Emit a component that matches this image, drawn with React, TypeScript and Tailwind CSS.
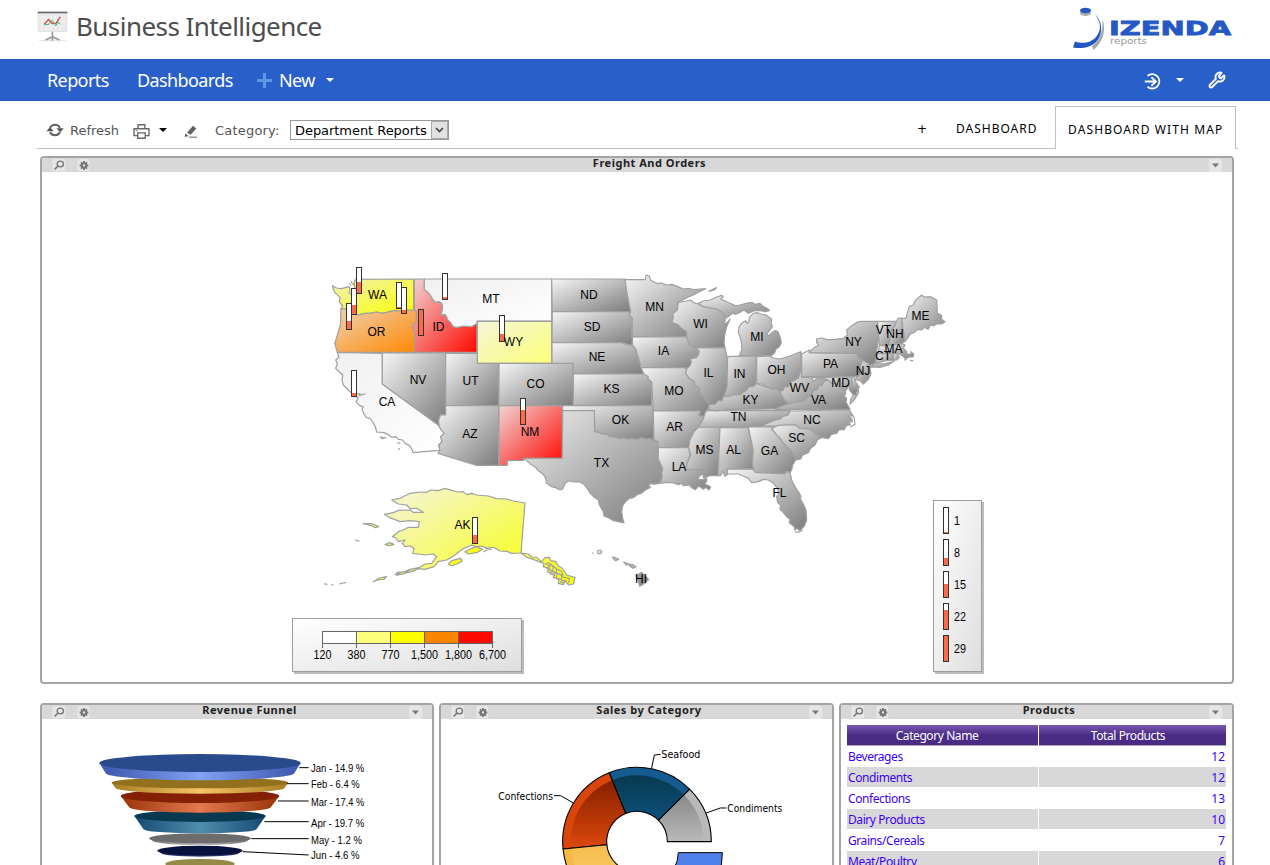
import type { ReactNode } from "react";
import { Wrench } from "lucide-react";

type Shape = { d: string; fill?: string };
type Slice = { from: number; to: number; rim: string; face: string };

const COAST = "L292,158 L288,172 L291,182 L282,192 L276,202 L281,208 L284,215 L284,277";

const WEST: Shape[] = [
  { fill: "url(#yellow)", d: "M37,77 L50,84 L64,86 L76,83 L88,80 L90,91 L87,98 L93,102 L100,96 L105,84 L101,72 L107,58 L281,57 L281,150 L258,151 L240,153 L222,152 L200,157 L185,160 L170,156 L150,160 L135,160 L120,164 L108,164 L95,160 L92,152 L85,148 L63,146 L68,138 L58,126 L60,112 L45,98 L40,88 Z" },
  { fill: "url(#orange)", d: "M63,146 L85,148 L92,152 L95,160 L108,164 L120,164 L135,160 L150,160 L170,156 L185,160 L200,157 L222,152 L240,153 L258,151 L281,150 " + COAST + " L52,277 L44,250 L50,232 L55,215 L61,195 L62,170 Z" },
  { fill: "url(#red)", d: "M283,57 L313,57 L313,88 L322,96 L330,104 L338,118 L347,127 L358,125 L367,132 L367,150 L362,165 L374,163 L380,170 L382,178 L392,188 L400,200 L410,202 L430,198 L455,200 L464,194 L471,192 L471,277 L284,277 L284,215 L276,202 L282,192 L291,182 L288,172 L292,158 L283,150 Z" },
  { fill: "url(#white)", d: "M313,57 L695,57 L695,183 L471,183 L471,192 L464,194 L455,200 L430,198 L410,202 L400,200 L392,188 L382,178 L380,170 L374,163 L362,165 L367,150 L367,132 L358,125 L347,127 L338,118 L330,104 L322,96 L313,88 Z" },
  { fill: "url(#paleYellow)", d: "M472,184 L695,184 L695,310 L472,310 Z" },
  { fill: "url(#white)", d: "M52,277 L187,280 L187,372 L355,495 L362,508 L373,520 L362,530 L366,545 L356,555 L360,571 L320,574 L280,578 L275,566 L268,556 L255,550 L248,540 L235,538 L228,530 L215,532 L205,524 L192,518 L170,516 L166,500 L158,486 L150,475 L140,473 L132,463 L126,448 L130,440 L118,436 L108,425 L115,412 L103,410 L95,400 L85,390 L70,375 L66,362 L68,345 L58,336 L47,325 L52,312 L47,300 L57,292 Z" },
  { d: "M187,279 L377,279 L377,465 L368,466 L362,464 L356,480 L358,496 L355,495 L187,372 Z" },
  { d: "M377,280 L472,280 L472,310 L536,310 L536,437 L377,437 Z" },
  { d: "M377,437 L536,437 L536,616 L470,616 L354,580 L360,571 L356,555 L366,545 L362,530 L373,520 L362,508 L357,495 L356,480 L362,464 L377,465 Z" },
  { d: "M537,310 L760,310 L760,437 L537,437 Z" },
  { fill: "url(#red)", d: "M537,437 L727,437 L727,594 L612,595 L612,601 L562,602 L562,616 L537,616 Z" },
  { fill: "none", d: "M108,402 L120,401 L118,407 L128,403 L137,402 M180,530 L190,534 L200,533 M183,536 L193,535 M232,548 L241,550 M234,566 L240,568 M87,70 L93,76 M92,64 L98,72 L104,74" },
];

const CENTRAL: Shape[] = [
  { d: "M35,42 L255,42 L259,70 L265,90 L268,110 L272,140 L37,140 Z" },
  { d: "M37,140 L272,140 L268,150 L277,160 L275,215 L278,225 L275,240 L262,238 L245,233 L36,233 Z" },
  { d: "M36,233 L245,233 L262,240 L278,242 L287,252 L292,270 L298,282 L303,305 L312,327 L100,327 L100,295 L36,295 Z" },
  { d: "M100,327 L315,327 L325,335 L324,342 L335,352 L335,421 L100,421 Z" },
  { d: "M68,422 L338,422 L342,470 L340,525 L328,520 L320,523 L305,518 L290,523 L275,520 L260,523 L250,518 L240,522 L225,516 L210,515 L200,507 L190,508 L175,502 L164,498 L163,437 L68,437 Z" },
  { fill: "url(#texas)", d: "M68,437 L163,437 L164,500 L175,502 L190,508 L200,507 L210,515 L225,516 L240,522 L250,518 L260,523 L275,520 L290,523 L305,518 L320,523 L328,520 L342,526 L354,530 L354,582 L362,596 L368,610 L365,625 L367,635 L358,655 L340,658 L334,655 L325,662 L332,667 L315,676 L304,685 L293,688 L280,698 L268,700 L255,712 L248,722 L245,740 L248,760 L252,774 L235,770 L218,766 L205,758 L192,753 L190,740 L178,720 L175,705 L162,696 L150,684 L144,674 L132,658 L118,650 L100,651 L85,648 L76,654 L68,672 L60,675 L47,668 L35,665 L20,655 L16,638 L10,628 L-4,618 L-14,607 L-30,596 L-48,580 L67,580 Z" },
  { d: "M255,44 L316,44 L318,30 L328,33 L332,46 L350,55 L365,54 L380,60 L395,58 L412,64 L430,72 L445,70 L460,74 L497,71 L478,80 L460,90 L440,98 L415,112 L412,135 L398,146 L400,158 L396,172 L415,180 L422,188 L440,200 L442,215 L277,215 L277,160 L268,150 L272,140 L265,105 L262,90 Z" },
  { d: "M277,216 L441,216 L445,232 L448,240 L458,245 L465,250 L478,258 L476,268 L470,277 L452,282 L454,292 L450,302 L440,312 L432,308 L303,308 L297,285 L292,270 L287,252 L278,242 Z" },
  { d: "M303,308 L432,308 L440,312 L437,325 L448,340 L463,350 L463,362 L475,365 L480,374 L478,385 L492,395 L498,408 L508,418 L505,432 L497,437 L492,455 L475,450 L482,438 L340,438 L335,350 L324,342 L325,335 L312,327 Z" },
  { d: "M340,438 L482,438 L476,452 L492,455 L486,470 L478,482 L470,488 L462,500 L458,510 L450,525 L448,548 L355,548 L354,530 L342,525 Z" },
  { d: "M355,548 L446,548 L450,570 L443,590 L437,612 L488,614 L488,626 L478,634 L473,642 L488,644 L500,638 L500,650 L494,656 L512,666 L507,675 L498,667 L490,673 L476,663 L466,674 L455,668 L448,660 L430,662 L425,655 L415,659 L400,654 L380,652 L362,655 L367,635 L365,625 L368,610 L355,582 Z" },
  { d: "M478,485 L540,487 L534,632 L510,632 L490,638 L488,614 L437,612 L443,590 L452,570 L446,548 L450,525 L462,500 Z" },
  { d: "M540,487 L625,488 L637,555 L640,610 L562,612 L565,626 L555,634 L548,618 L542,632 L534,632 Z" },
  { d: "M465,248 L555,248 L561,275 L561,350 L562,375 L550,395 L545,408 L535,406 L525,418 L508,418 L498,408 L492,395 L478,385 L480,374 L475,365 L463,362 L463,350 L448,340 L437,325 L440,312 L450,302 L454,292 L452,282 L470,277 L476,268 L478,258 Z" },
  { d: "M563,275 L648,272 L648,355 L640,365 L628,364 L618,378 L608,382 L600,390 L585,388 L573,393 L550,395 L555,385 L561,365 Z" },
  { d: "M415,112 L440,108 L452,105 L460,113 L475,117 L490,125 L530,132 L545,140 L552,147 L556,165 L550,180 L562,172 L570,162 L560,185 L554,210 L552,232 L555,248 L465,248 L448,240 L440,215 L440,200 L422,188 L415,180 L396,172 L400,158 L398,146 L412,135 Z" },
  { d: "M475,115 L490,108 L510,105 L530,96 L545,91 L550,95 L542,102 L560,110 L572,116 L585,122 L600,120 L618,115 L635,112 L645,118 L660,115 L668,123 L685,132 L688,137 L675,140 L660,136 L640,138 L625,145 L612,135 L600,142 L585,148 L578,144 L565,155 L556,160 L552,147 L545,140 L530,132 L490,125 Z" },
  { d: "M507,79 L520,72 L530,68 L523,75 Z" },
  { d: "M505,437 L750,437 L745,450 L728,460 L715,464 L700,475 L682,478 L665,487 L475,486 L486,470 L492,455 L497,440 Z" },
  { d: "M505,434 L508,418 L525,418 L535,406 L545,408 L550,395 L573,393 L585,388 L600,390 L608,382 L618,378 L628,364 L640,365 L650,355 L662,360 L675,365 L700,367 L720,378 L730,395 L745,413 L725,425 L705,432 L560,433 L530,438 Z" },
];

const EAST: Shape[] = [
  { d: "M40,100 L52,98 L62,102 L78,105 L95,118 L93,128 L97,140 L90,150 L80,162 L85,168 L93,160 L105,152 L114,155 L120,170 L124,188 L118,200 L108,207 L104,218 L95,227 L-2,227 L5,210 L5,192 L2,175 L-5,158 L-3,142 L3,132 L10,126 L18,122 L20,130 L27,125 L28,112 Z" },
  { d: "M50,230 L88,228 L100,234 L120,237 L150,228 L165,222 L183,215 L183,265 L180,280 L175,295 L162,300 L155,305 L150,315 L142,322 L135,318 L130,330 L120,333 L110,326 L98,328 L75,318 L65,312 L50,310 Z" },
  { d: "M185,222 L208,210 L208,218 L350,220 L356,232 L368,240 L360,262 L368,275 L355,288 L345,290 L185,290 Z" },
  { d: "M183,265 L185,292 L217,292 L218,305 L230,297 L245,293 L265,300 L252,305 L245,318 L238,315 L232,330 L220,332 L216,346 L205,350 L195,360 L180,365 L165,366 L150,371 L138,365 L130,355 L125,345 L120,335 L130,330 L135,318 L142,322 L150,315 L155,305 L175,295 Z" },
  { d: "M265,300 L272,308 L290,312 L295,320 L308,328 L318,340 L312,348 L320,355 L318,366 L325,378 L330,388 L105,388 L125,378 L150,371 L165,366 L180,365 L195,360 L205,350 L216,346 L220,332 L232,330 L238,315 L245,318 L252,305 Z" },
  { d: "M217,293 L335,291 L340,318 L355,325 L348,345 L340,345 L328,330 L325,308 L322,325 L315,335 L300,320 L290,312 L272,308 L265,300 L245,293 L230,297 L218,305 Z" },
  { d: "M335,290 L342,292 L348,308 L358,322 L340,324 Z" },
  { d: "M340,345 L350,345 L342,360 L330,372 L332,358 Z" },
  { d: "M368,240 L392,252 L390,265 L393,280 L385,298 L370,312 L362,303 L345,298 L355,288 L368,275 L360,262 Z" },
  { d: "M208,216 L220,205 L236,195 L230,188 L230,177 L245,174 L262,179 L285,178 L310,175 L322,165 L320,150 L335,137 L352,126 L365,124 L413,124 L415,150 L415,180 L408,222 L405,250 L392,255 L368,240 L356,232 L350,220 L208,218 Z" },
  { d: "M386,262 L410,252 L435,251 L462,244 L445,255 L420,262 L400,261 Z" },
  { d: "M413,124 L470,124 L465,138 L455,150 L450,175 L447,196 L418,196 Z" },
  { d: "M470,124 L475,114 L485,115 L489,150 L495,183 L485,190 L447,195 L450,175 L455,150 L465,138 Z" },
  { d: "M418,197 L447,196 L485,190 L495,195 L490,205 L498,212 L502,222 L515,222 L512,215 L521,222 L520,230 L502,232 L498,238 L488,228 L478,222 L413,222 Z" },
  { d: "M413,222 L460,220 L460,240 L435,243 L407,250 Z" },
  { d: "M460,220 L472,221 L478,232 L470,240 L460,241 Z" },
  { d: "M485,115 L498,115 L502,98 L508,80 L520,75 L525,62 L545,45 L552,51 L572,50 L590,60 L592,100 L605,106 L604,117 L615,125 L605,132 L590,132 L580,138 L572,134 L564,148 L553,142 L545,150 L532,148 L523,158 L512,160 L502,176 L495,185 Z" },
  { d: "M150,393 L328,390 L338,408 L322,408 L335,415 L337,425 L320,428 L332,433 L318,438 L312,450 L298,448 L290,460 L275,463 L265,476 L243,472 L210,447 L180,445 L165,440 L105,438 L65,438 L82,430 L100,422 L120,417 L130,409 L145,405 Z" },
  { fill: "none", d: "M328,390 L342,412 L345,433 L330,441 M510,241 L520,242 M492,240 L499,239 M355,327 L356,338 L342,360" },
  { d: "M95,445 L115,436 L165,434 L180,445 L210,447 L243,474 L232,480 L225,495 L212,505 L205,518 L188,525 L182,537 L167,540 L160,525 L155,515 L140,500 L130,490 L118,472 L108,463 Z" },
  { d: "M25,441 L100,440 L95,447 L108,463 L118,472 L130,490 L140,500 L155,515 L160,525 L167,540 L158,555 L155,570 L150,578 L138,574 L135,582 L45,577 L37,555 L40,510 L32,475 Z" },
  { d: "M-38,567 L40,568 L45,577 L135,582 L138,574 L150,578 L155,600 L165,620 L178,640 L183,650 L180,655 L190,672 L198,690 L200,720 L193,738 L180,752 L170,745 L164,750 L163,740 L148,728 L150,718 L140,710 L132,700 L120,688 L122,676 L113,668 L110,650 L117,640 L112,625 L100,610 L85,600 L70,598 L55,605 L35,608 L25,595 L10,588 L-5,582 L-38,582 Z" },
  { fill: "none", d: "M165,755 L176,757 L188,750" },
];

const FAR: Shape[] = [
  { fill: "url(#alaska)", d: "M245,60 L270,55 L300,40 L330,36 L350,37 L362,30 L385,32 L405,25 L425,31 L445,36 L460,35 L470,44 L485,40 L500,45 L535,48 L560,56 L590,57 L610,63 L645,69 L633,219 L605,220 L590,214 L570,213 L550,202 L530,205 L515,198 L500,200 L485,195 L478,198 L462,205 L450,213 L435,225 L425,232 L410,240 L385,245 L372,260 L345,268 L325,266 L305,275 L275,282 L260,286 L262,276 L280,277 L300,268 L330,262 L345,252 L365,250 L380,230 L370,222 L345,225 L325,222 L308,220 L312,205 L300,198 L285,200 L277,190 L285,180 L265,185 L258,174 L247,170 L265,155 L280,150 L295,142 L325,142 L328,125 L300,122 L270,125 L240,113 L223,103 L250,98 L265,91 L300,90 L310,97 L340,97 L320,85 L300,86 L290,75 L265,72 Z" },
  { fill: "url(#yellowIsland)", d: "M465,215 L485,205 L500,200 L518,208 L500,218 L475,222 Z M415,252 L425,242 L452,235 L457,243 L440,252 L425,258 Z M190,305 L208,294 L230,290 L222,298 L205,299 Z M160,131 L185,131 L206,140 L195,143 L182,136 Z M225,194 L240,188 L252,193 L238,197 Z M255,283 L280,276 L300,270 L280,282 Z" },
  { fill: "url(#yellowIsland)", d: "M633,219 L655,222 L665,231 L680,232 L695,245 L705,233 L718,232 L722,242 L738,245 L745,258 L756,264 L770,285 L795,293 L790,312 L775,315 L765,301 L760,314 L745,310 L747,297 L730,292 L735,280 L712,276 L718,265 L700,260 L702,250 L685,244 L670,238 L650,232 Z" },
  { fill: "none", d: "M705,250 L720,258 L711,266 L725,272 L720,282 L735,286 M712,246 L730,260 L728,274 L742,280 L738,295 L752,298 M722,252 L740,267 L738,278 L755,286 L754,300 L770,304 M740,267 L754,274 L760,291 L778,295 L776,310 M750,305 L762,308 M135,180 L148,184 M43,311 L52,314 M64,315 L70,313 M88,312 L108,307 M520,216 L535,207 L545,209 M525,202 L535,207" },
  { d: "M862,213 L870,210 L876,215 L872,221 L864,221 Z M847,218 L850,221 M907,231 L915,233 L926,238 L916,242 Z M941,246 L951,250 L960,253 L948,255 Z M957,255 L966,253 L978,260 L969,265 L960,259 Z M978,287 L995,277 L1005,286 L1016,299 L1001,312 L989,319 L985,302 Z" },
];

const LABELS: [string, number, number][] = [
  ["WA", 377.5, 299], ["OR", 376.5, 336], ["ID", 438.5, 331], ["MT", 491, 303], ["WY", 513.5, 346], ["NV", 418, 384],
  ["UT", 470.5, 385], ["CO", 535.5, 388], ["CA", 387, 406], ["AZ", 470, 438], ["NM", 530, 436], ["ND", 589, 299],
  ["SD", 592, 331], ["NE", 597, 361], ["KS", 611.5, 393], ["OK", 620.5, 424], ["TX", 601.5, 467], ["MN", 654.5, 311],
  ["IA", 663.5, 355], ["MO", 674, 395], ["AR", 674.5, 431], ["LA", 679, 471], ["WI", 700.5, 328], ["IL", 708.5, 377],
  ["IN", 739.5, 378], ["KY", 750.5, 404], ["TN", 738.5, 421], ["MS", 704.5, 454], ["AL", 733.5, 454], ["GA", 769.5, 455],
  ["FL", 779.5, 497], ["SC", 796.5, 442], ["NC", 812, 424], ["VA", 818.5, 404], ["WV", 799.5, 392], ["OH", 776.5, 374],
  ["MI", 757, 341], ["PA", 830.5, 368], ["MD", 840.5, 387], ["NJ", 863, 375], ["NY", 853.5, 346], ["VT", 883.5, 334],
  ["NH", 895, 338], ["MA", 893.5, 353], ["CT", 883, 360], ["ME", 920.5, 320], ["AK", 462.5, 529], ["HI", 641, 583],
];

const GAUGES: [number, number, number][] = [
  [359, 268, 11], [354, 289, 9], [349, 304, 8], [399, 283, 1], [404, 288, 3], [421, 310, 26], [445, 274, 2],
  [502, 316, 7], [354, 371, 3], [523, 399, 14], [475, 518, 8],
];

const GRADIENTS: [string, string, string][] = [
  ["grey", "#f6f6f6", "#7c7c7c"],
  ["texas", "#eeeeee", "#7c7c7c"],
  ["white", "#f0f0f0", "#ffffff"],
  ["yellow", "#f0f0b8", "#fbff00"],
  ["paleYellow", "#f5f5d8", "#fbff78"],
  ["orange", "#efd2b4", "#ff8800"],
  ["red", "#f0d4d4", "#ff0800"],
  ["alaska", "#f4f4e0", "#f8ff18"],
  ["yellowIsland", "#f8ff50", "#f8ff00"],
];

function States({ items, at }: { items: Shape[]; at: string }) {
  return (
    <g transform={`${at} scale(0.333333)`} stroke="#a0a0a0" strokeWidth="3.6" strokeLinejoin="round">
      {items.map((s, i) => <path key={i} d={s.d} fill={s.fill ?? "url(#grey)"} />)}
    </g>
  );
}

function Gauge({ x, y, level }: { x: number; y: number; level: number }) {
  return (
    <g>
      <rect x={x - 2.5} y={y - 0.5} width="5" height="26" fill="#fff" />
      <rect x={x - 2} y={y + 25 - level} width="4" height={level} fill="#fc6a48" />
      <rect x={x - 2.5} y={y - 0.5} width="5" height="26" fill="none" stroke="#333" />
    </g>
  );
}

function UsMap() {
  return (
    <svg viewBox="42 172 1190 510" className="block h-[510px] w-[1190px] font-['Liberation_Sans',sans-serif] text-[12px]">
      <defs>
        {GRADIENTS.map(([id, a, b]) => (
          <linearGradient key={id} id={id} x1="0" y1="0" x2="1" y2="1">
            <stop offset="0" stopColor={a} /><stop offset="1" stopColor={b} />
          </linearGradient>
        ))}
        <linearGradient id="legend" x1="0" y1="0" x2="1" y2="1"><stop stopColor="#fff" /><stop offset="1" stopColor="#dedede" /></linearGradient>
      </defs>
      <States items={WEST} at="translate(320 260)" />
      <States items={CENTRAL} at="translate(540 265)" />
      <States items={EAST} at="translate(740 280)" />
      <States items={FAR} at="translate(310 480)" />
      {GAUGES.map(([x, y, level], i) => <Gauge key={i} x={x} y={y} level={level} />)}
      <g textAnchor="middle">{LABELS.map(([t, x, y]) => <text key={t} x={x} y={y}>{t}</text>)}</g>

      <rect x="294" y="620" width="230" height="54" fill="#bcbcbc" />
      <rect x="292.5" y="618.5" width="229" height="53" fill="url(#legend)" stroke="#9d9d9d" />
      {["#ffffff", "#fbff7c", "#fbff00", "#fa8500", "#fa0a00"].map((c, i) => (
        <rect key={c} x={322.5 + i * 34} y="631.5" width="34" height="12" fill={c} stroke="#666" />
      ))}
      {["120", "380", "770", "1,500", "1,800", "6,700"].map((t, i) => (
        <g key={t}>
          <path d={`M${322.5 + i * 34},643 v5`} stroke="#666" />
          <text x={322.5 + i * 34} y="659" textAnchor="middle" textLength={t.length === 3 ? 18 : 27} lengthAdjust="spacingAndGlyphs">{t}</text>
        </g>
      ))}

      <rect x="935" y="502" width="49" height="172" fill="#bcbcbc" />
      <rect x="933.5" y="500.5" width="48" height="171" fill="url(#legend)" stroke="#9d9d9d" />
      {([["1", 1], ["8", 7], ["15", 13], ["22", 19], ["29", 25]] as [string, number][]).map(([t, level], i) => (
        <g key={t}>
          <Gauge x={946} y={508 + i * 32} level={level} />
          <text x="954" y={525 + i * 32} textLength={t.length * 6} lengthAdjust="spacingAndGlyphs">{t}</text>
        </g>
      ))}
    </svg>
  );
}

const DISCS = [
  { rx: 302, cy: 204, ry: 27, brx: 283, bcy: 234, bry: 22, top: "#2a4b8b", edge: "#3a55ad", mid: "#81a2f5", label: "Jan - 14.9 %", ly: 217, ty: 231 },
  { rx: 265, cy: 263, ry: 17, brx: 254, bcy: 278, bry: 18, top: "#92701d", edge: "#aa7d25", mid: "#f5c668", label: "Feb - 6.4 %", ly: 265, ty: 279 },
  { rx: 238, cy: 303, ry: 21, brx: 213, bcy: 336, bry: 17, top: "#842003", edge: "#9a3508", mid: "#e47850", label: "Mar - 17.4 %", ly: 317, ty: 333 },
  { rx: 197, cy: 363, ry: 18, brx: 170, bcy: 402, bry: 13, top: "#073a50", edge: "#174a76", mid: "#4e8dac", label: "Apr - 19.7 %", ly: 379, ty: 396 },
  { rx: 153, cy: 430, ry: 15, brx: 143, bcy: 437, bry: 13, top: "#6c6c6c", edge: "#777777", mid: "#bababa", label: "May - 1.2 %", ly: 430, ty: 447 },
  { rx: 128, cy: 467, ry: 15, brx: 118, bcy: 473, bry: 12, top: "#08123e", edge: "#0a174c", mid: "#495a99", label: "Jun - 4.6 %", ly: 469, ty: 492 },
  { rx: 104, cy: 506, ry: 14, brx: 96, bcy: 520, bry: 12, top: "#958a48", edge: "#908548", mid: "#d8cb80", label: "", ly: 0, ty: 0 },
];

function Funnel() {
  return (
    <svg viewBox="42 719 390 146" className="block h-[146px] w-[390px]">
      <defs>
        {DISCS.map((d, i) => (
          <linearGradient key={i} id={`disc${i}`}>
            <stop offset="0" stopColor={d.edge} /><stop offset="0.5" stopColor={d.mid} /><stop offset="1" stopColor={d.edge} />
          </linearGradient>
        ))}
      </defs>
      <g transform="translate(30 695) scale(0.333333)">
        {DISCS.map((d, i) => ({ d, i })).reverse().map(({ d, i }) => (
          <g key={i}>
            <path fill={`url(#disc${i})`} d={`M${510 - d.rx},${d.cy} L${510 - d.brx},${d.bcy} A${d.brx},${d.bry} 0 0 0 ${510 + d.brx},${d.bcy} L${510 + d.rx},${d.cy} Z`} />
            <ellipse cx="510" cy={d.cy} rx={d.rx} ry={d.ry} fill={d.top} />
            {d.label && <path d={`M${511 + d.rx - (i < 4 ? 5 : 0)},${d.ly + 1} L836,${i === 5 ? 480 : d.ly + 1}`} stroke="#000" strokeWidth="3" />}
            {d.label && <text x="843" y={d.ty} className="font-['Liberation_Sans',sans-serif] text-[33px]" textLength={d.label.length === 12 ? 160 : d.label.startsWith("May") ? 153 : 146} lengthAdjust="spacingAndGlyphs">{d.label}</text>}
          </g>
        ))}
      </g>
    </svg>
  );
}

const SLICES: Slice[] = [
  { from: 0, to: 45, rim: "#b9b9b9", face: "url(#condiments)" },
  { from: 45, to: 112, rim: "#155b90", face: "url(#seafood)" },
  { from: 112, to: 185.7, rim: "#da460a", face: "url(#confections)" },
  { from: 185.7, to: 250, rim: "#f5b945", face: "url(#amber)" },
];

function ring(cx: number, cy: number, outer: number, inner: number, from: number, to: number) {
  const point = (r: number, a: number) => `${cx + r * Math.cos((a * Math.PI) / 180)},${cy - r * Math.sin((a * Math.PI) / 180)}`;
  return `M${point(outer, from)} A${outer},${outer} 0 0 0 ${point(outer, to)} L${point(inner, to)} A${inner},${inner} 0 0 1 ${point(inner, from)} Z`;
}

function Donut() {
  const fades: [string, string, string][] = [["condiments", "#898989", "#b9b9b9"], ["seafood", "#08394d", "#0e5180"], ["confections", "#872000", "#dc480b"], ["amber", "#f7bd4d", "#f9d47a"]];
  return (
    <svg viewBox="441 719 391 146" className="block h-[146px] w-[391px]">
      <defs>
        {fades.map(([id, a, b]) => <linearGradient key={id} id={id} x1="0" y1="0" x2="0" y2="1"><stop offset="0" stopColor={a} /><stop offset="1" stopColor={b} /></linearGradient>)}
      </defs>
      <g transform="translate(435 695) scale(0.333333)" strokeLinejoin="round">
        {SLICES.map((s) => (
          <g key={s.from}>
            <path d={ring(606, 440, 223, 91, s.from, s.to)} fill={s.rim} />
            <path d={ring(606, 440, 199, 91, s.from, s.to)} fill={s.face} />
            <path d={ring(606, 440, 223, 91, s.from, s.to)} fill="none" stroke="#000" strokeWidth="3.3" />
          </g>
        ))}
        <path d={ring(639, 473, 223, 91, -70, 0)} fill="#5080ec" stroke="#000" strokeWidth="3" />
        <path d="M650,219 L658,180 L677,178 M415,324 L377,302 L357,302 M814,354 L856,339 L874,339" fill="none" stroke="#000" strokeWidth="3" />
        <g className="font-['DejaVu_Sans',sans-serif] text-[30px]">
          <text x="679" y="189" textLength="117" lengthAdjust="spacingAndGlyphs">Seafood</text>
          <text x="190" y="315" textLength="164" lengthAdjust="spacingAndGlyphs">Confections</text>
          <text x="877" y="351" textLength="165" lengthAdjust="spacingAndGlyphs">Condiments</text>
        </g>
      </g>
    </svg>
  );
}

function Panel({ title, className, children }: { title: string; className: string; children: ReactNode }) {
  return (
    <section className={`shrink-0 overflow-hidden rounded-[4px] border-2 border-[#a4a4a4] bg-white ${className}`}>
      <header className="flex h-[14px] items-center bg-[#d8d8d8]">
        <svg viewBox="66 478 114 39" className="ml-[10px] h-[13px] w-[38px] shrink-0">
          <rect x="67" y="478" width="39" height="37" rx="6" fill="#e6e6e6" />
          <ellipse cx="91" cy="493" rx="9.5" ry="8.5" fill="none" stroke="#777" strokeWidth="4" />
          <path d="M84,499 L74,509" stroke="#777" strokeWidth="5" />
          <rect x="142" y="478" width="36" height="37" rx="6" fill="#e6e6e6" />
          <path d="M162,484 V511 M149,497.5 H175 M153,488 L171,507 M171,488 L153,507" stroke="#777" strokeWidth="5.5" />
          <circle cx="162" cy="497.5" r="6.5" fill="#e6e6e6" stroke="#777" strokeWidth="6" />
        </svg>
        <h2 className="flex-1 whitespace-nowrap pb-[4px] text-center font-['Noto_Sans',sans-serif] text-[11px] leading-[12px] font-bold tracking-[0.5px] text-[#222]">{title}</h2>
        <svg viewBox="0 0 13 13" className="mr-[10px] h-[13px] w-[13px] shrink-0"><rect width="13" height="13" rx="2" fill="#e6e6e6" /><path d="M3,4.5 h7 l-3.5,4 Z" fill="#777" /></svg>
      </header>
      {children}
    </section>
  );
}

const PRODUCTS: [string, number][] = [["Beverages", 12], ["Condiments", 12], ["Confections", 13], ["Dairy Products", 10], ["Grains/Cereals", 7], ["Meat/Poultry", 6]];

function Caret({ className }: { className: string }) {
  return <svg viewBox="0 0 8 4" className={`h-[4px] w-[8px] shrink-0 ${className}`}><path d="M0,0 H8 L4,4 Z" fill="currentColor" /></svg>;
}

export default function App() {
  return (
    <div className="h-[865px] w-[1270px] overflow-hidden bg-white text-black">
      <header className="flex h-[59px] items-start justify-between pl-[37px] pr-[38px]">
        <div className="flex items-start">
          <svg viewBox="22 34 92 94" className="mt-[11px] h-[31px] w-[31px]">
            <rect x="24" y="39" width="88" height="58" fill="#e9e9e9" stroke="#ccc" />
            <path d="M36,40V96M50,40V96M64,40V96M78,40V96M92,40V96M25,52H111M25,66H111M25,80H111" stroke="#f7f7f7" strokeWidth="2" />
            <rect x="23" y="36" width="90" height="5" fill="#656570" />
            <path d="M43,74 L56,60 L67,72 L79,71 L92,51" fill="none" stroke="#db4b4b" strokeWidth="4" />
            <path d="M43,76 L56,75 L66,62 L78,79 L84,68 L92,74" fill="none" stroke="#40b76f" strokeWidth="3" />
            <ellipse cx="68" cy="123" rx="44" ry="3" fill="#e5e5e5" />
            <path d="M68,97 V124 M68,112 L47,122 M68,112 L89,122" fill="none" stroke="#999" strokeWidth="5" />
          </svg>
          <h1 className="ml-[8px] mt-[6px] w-[260px] whitespace-nowrap font-['Noto_Sans',sans-serif] text-[26px] leading-[40px] tracking-[-0.56px] text-[#4d4d4d]">Business Intelligence</h1>
        </div>
        <svg viewBox="1072 6 160 46" className="mt-[6px] h-[46px] w-[160px]">
          <ellipse cx="1085.5" cy="13" rx="5.5" ry="3" fill="#aaa" />
          <ellipse cx="1085.5" cy="10.5" rx="5.5" ry="2.7" fill="#2459c5" />
          <path d="M1102.5,19 C1107,33 1101,44 1093.5,50 L1092,46 C1099,41 1103,33 1102.5,19 Z" fill="#aaa" />
          <path d="M1094,13 C1103,21 1103,34 1097,41 C1091,48 1081,49 1073,47.5 L1075,41.5 C1082,44 1091,43 1096,37 C1102,30 1101,21 1094,13 Z" fill="#2459c5" />
          <text x="1109" y="35" textLength="122" lengthAdjust="spacingAndGlyphs" fill="#2459c5" stroke="#2459c5" strokeWidth="0.8" className="font-['DejaVu_Sans',sans-serif] text-[19px] font-bold">IZENDA</text>
          <text x="1110" y="44" textLength="37" lengthAdjust="spacingAndGlyphs" fill="#999" className="font-['DejaVu_Sans',sans-serif] text-[9px]">reports</text>
        </svg>
      </header>

      <nav className="flex h-[42px] items-center bg-[#295fc9] pl-[47px] font-['Noto_Sans',sans-serif] text-[18px] text-white">
        <span className="w-[90px] tracking-[-0.6px]">Reports</span>
        <span className="w-[120px] tracking-[-0.6px]">Dashboards</span>
        <svg viewBox="0 0 15 15" className="h-[15px] w-[15px]"><path d="M7.5,0 V15 M0,7.5 H15" stroke="#5f96e2" strokeWidth="3" /></svg>
        <span className="ml-[7px] w-[47px] tracking-[-0.6px]">New</span>
        <Caret className="" />
        <svg viewBox="730 220 54 52" className="ml-auto mt-[2px] h-[17px] w-[18px]"><path d="M740,229 A22,22 0 1 1 740,262 M732,246 H764 M752,233 L766,246 L752,259" fill="none" stroke="#fff" strokeWidth="5.5" /></svg>
        <Caret className="ml-[14px]" />
        <Wrench className="ml-[24px] mr-[44px]" size={18} strokeWidth={2.5} />
      </nav>

      <div className="ml-[37px] flex h-[48px] w-[1201px] items-stretch border-b border-[#c0c0c0] font-['DejaVu_Sans',sans-serif] text-[13px] text-[#555]">
        <div className="flex items-center pt-[11px]">
          <svg viewBox="49 367 52 48" className="ml-[9px] h-[16px] w-[18px]"><path d="M60,384 A17,17 0 0 1 90,384 M90,398 A17,17 0 0 1 60,398" fill="none" stroke="#606060" strokeWidth="6" /><path d="M79,386 L101,386 L91,398 Z M49,395 L60,383 L71,395 Z" fill="#505050" /></svg>
          <span className="ml-[6px] w-[63px] pt-px tracking-[0px]">Refresh</span>
          <svg viewBox="308 374 50 44" className="mt-[2px] h-[15px] w-[17px]"><path d="M323,387 V376 H343 V387 M320,408 H311 V388 H355 V408 H346 M322,400 H344 V416 H322 Z" fill="none" stroke="#666" strokeWidth="4" /><path d="M316,394H321" stroke="#666" strokeWidth="3" /></svg>
          <Caret className="ml-[9px] text-black" />
          <svg viewBox="463 374 42 38" className="ml-[17px] mt-[2px] h-[13px] w-[14px]"><path d="M472,397 L490,376 L500,384 L483,403 Z M467,398 L477,407 L465,409 Z" fill="#626262" /><path d="M478,410 H502" stroke="#626262" strokeWidth="3" /></svg>
          <span className="ml-[17px] w-[75px] pt-px tracking-[0.2px]">Category:</span>
          <div className="flex h-[20px] w-[159px] border border-[#999] bg-white text-black">
            <span className="w-[140px] whitespace-nowrap pl-[4px] pt-px leading-[18px] tracking-[-0.05px]">Department Reports</span>
            <span className="flex w-[17px] items-center justify-center border border-[#aaa] bg-[#e2e2e2]"><svg viewBox="0 0 9 6" className="h-[6px] w-[9px]"><path d="M1,1 L4.5,4.5 L8,1" fill="none" stroke="#444" strokeWidth="1.7" /></svg></span>
          </div>
        </div>
        <div className="ml-auto flex text-[12px] text-black">
          <span className="w-[39px] pt-[19px]">+</span>
          <span className="w-[99px] whitespace-nowrap pt-[19px] font-['Noto_Sans',sans-serif] tracking-[1px]">DASHBOARD</span>
          <span className="mr-[2px] mt-[5px] -mb-px w-[181px] whitespace-nowrap border border-b-0 border-[#c0c0c0] bg-white pl-[12px] pt-[14px] font-['Noto_Sans',sans-serif] tracking-[1.12px]">DASHBOARD WITH MAP</span>
        </div>
      </div>

      <main className="pl-[40px] pt-[7px]">
        <Panel title="Freight And Orders" className="h-[528px] w-[1194px]"><UsMap /></Panel>
        <div className="mt-[19px] flex">
          <Panel title="Revenue Funnel" className="h-[220px] w-[394px]"><Funnel /></Panel>
          <Panel title="Sales by Category" className="ml-[5px] h-[220px] w-[395px]"><Donut /></Panel>
          <Panel title="Products" className="ml-[5px] h-[220px] w-[395px]">
            <div className="ml-[6px] mt-[6px] w-[379px] font-['Noto_Sans',sans-serif] text-[12px] tracking-[-0.42px] text-[#3d00f5]">
              <div className="grid h-[21px] grid-cols-[191px_187px] gap-px text-center leading-[21px] text-white">
                <span className="h-[21px] border-b border-[#aaa] bg-linear-to-b from-[#7755ae] from-5% via-[#4a2b86] via-50% to-[#4a2b86] pr-[11px]">Category Name</span>
                <span className="h-[21px] border-b border-[#aaa] bg-linear-to-b from-[#7755ae] from-5% via-[#4a2b86] via-50% to-[#4a2b86] pr-[9px]">Total Products</span>
              </div>
              {PRODUCTS.map(([name, count], i) => (
                <div key={name} className={i % 2 ? "mb-px grid h-[20px] grid-cols-[191px_187px] gap-px leading-[21px] *:h-[20px] *:bg-[#d8d8d8]" : "mb-px grid h-[20px] grid-cols-[191px_187px] gap-px leading-[21px]"}>
                  <span className="pl-px">{name}</span><span className="pr-px text-right tracking-[0px]">{count}</span>
                </div>
              ))}
            </div>
          </Panel>
        </div>
      </main>
    </div>
  );
}
